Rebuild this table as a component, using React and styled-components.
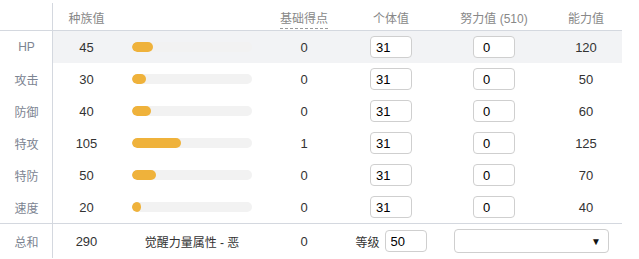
import React from "react";
import styled, { createGlobalStyle } from "styled-components";

const GlobalStyle = createGlobalStyle`
  body {
    margin: 0;
    background: #fff;
    font-family: "Liberation Sans", "Noto Sans CJK SC", sans-serif;
  }
`;

const stats = [
  { name: "HP", base: 45, point: 0, iv: 31, ev: 0, value: 120 },
  { name: "攻击", base: 30, point: 0, iv: 31, ev: 0, value: 50 },
  { name: "防御", base: 40, point: 0, iv: 31, ev: 0, value: 60 },
  { name: "特攻", base: 105, point: 1, iv: 31, ev: 0, value: 125 },
  { name: "特防", base: 50, point: 0, iv: 31, ev: 0, value: 70 },
  { name: "速度", base: 20, point: 0, iv: 31, ev: 0, value: 40 },
];

export default function App() {
  return (
    <>
      <GlobalStyle />
      <Table>
        <HeaderRow>
          <LabelCell />
          <HeadCell>种族值</HeadCell>
          <HeadCell />
          <HeadCell>
            <Dashed>基础得点</Dashed>
          </HeadCell>
          <HeadCell>个体值</HeadCell>
          <HeadCell>努力值 (510)</HeadCell>
          <HeadCell>能力值</HeadCell>
        </HeaderRow>
        {stats.map((s, i) => (
          <Row key={s.name} $shaded={i === 0}>
            <LabelCell>{s.name}</LabelCell>
            <Cell>{s.base}</Cell>
            <BarCell>
              <Track>
                <Fill style={{ width: `${(s.base / 255) * 120}px` }} />
              </Track>
            </BarCell>
            <Cell>{s.point}</Cell>
            <Cell>
              <NumInput defaultValue={s.iv} />
            </Cell>
            <Cell>
              <NumInput $pad={9} defaultValue={s.ev} />
            </Cell>
            <Cell>{s.value}</Cell>
          </Row>
        ))}
        <TotalRow>
          <LabelCell>总和</LabelCell>
          <Cell>290</Cell>
          <TextCell>觉醒力量属性 - 恶</TextCell>
          <Cell>0</Cell>
          <Cell>
            <Level>
              等级
              <NumInput defaultValue={50} />
            </Level>
          </Cell>
          <WideCell>
            <SelectBox>
              <Arrow>▼</Arrow>
            </SelectBox>
          </WideCell>
        </TotalRow>
      </Table>
    </>
  );
}

const Table = styled.div`
  width: 622px;
  padding-top: 3px;
`;

const columns = "53px 67px 144px 80px 94px 112px 72px";

const HeaderRow = styled.div`
  display: grid;
  grid-template-columns: ${columns};
  height: 27px;
  border-bottom: 1px solid #d4d8df;
`;

const Row = styled.div`
  display: grid;
  grid-template-columns: ${columns};
  height: 32px;
  background: ${(props) => (props.$shaded ? "#f2f3f5" : "#fff")};
`;

const TotalRow = styled(Row)`
  height: 34px;
  border-top: 1px solid #d4d8df;
`;

const LabelCell = styled.div`
  display: flex;
  align-items: center;
  justify-content: center;
  background: #fff;
  border-right: 1px solid #d4d8df;
  color: #7c8491;
  font-size: 12px;
  padding-left: 1px;
`;

const HeadCell = styled.div`
  display: flex;
  align-items: center;
  justify-content: center;
  color: #888;
  font-size: 12px;
  padding-top: 1px;
`;

const Dashed = styled.span`
  border-bottom: 1px dashed #9a9a9a;
  padding-bottom: 2px;
  margin-top: 3px;
`;

const Cell = styled.div`
  display: flex;
  align-items: center;
  justify-content: center;
  color: #333;
  font-size: 13px;
`;

const TextCell = styled(Cell)`
  font-size: 12px;
`;

const WideCell = styled(Cell)`
  grid-column: span 2;
  justify-content: flex-start;
  padding-left: 16px;
`;

const BarCell = styled.div`
  display: flex;
  align-items: center;
  padding-left: 12px;
`;

const Track = styled.div`
  width: 120px;
  height: 10px;
  border-radius: 5px;
  background: #f2f2f2;
  overflow: hidden;
`;

const Fill = styled.div`
  height: 100%;
  border-radius: 5px;
  background: #efb23b;
`;

const NumInput = styled.input`
  box-sizing: border-box;
  width: 42px;
  height: 22px;
  padding: 0 0 0 ${(props) => props.$pad || 5}px;
  border: 1px solid #cfcfcf;
  border-radius: 4px;
  background: #fff;
  color: #000;
  font-family: "Liberation Sans", sans-serif;
  font-size: 13px;
  outline: none;
`;

const Level = styled.div`
  display: flex;
  align-items: center;
  gap: 5px;
  font-size: 12px;
  color: #333;
`;

const SelectBox = styled.div`
  box-sizing: border-box;
  width: 155px;
  height: 24px;
  border: 1px solid #cfcfcf;
  border-radius: 4px;
  background: #fff;
  display: flex;
  align-items: center;
  justify-content: flex-end;
  padding-right: 7px;
`;

const Arrow = styled.span`
  font-size: 10px;
  color: #111;
`;
